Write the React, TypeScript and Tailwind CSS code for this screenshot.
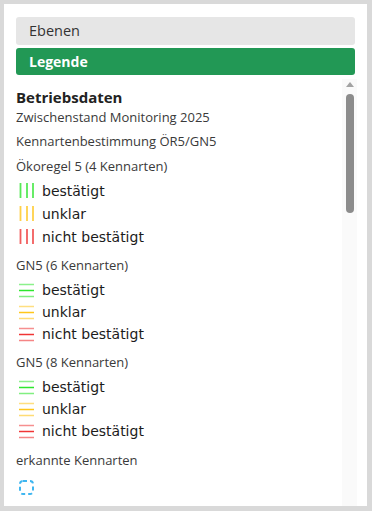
import React from "react";

type Status = { label: string; color: string };

const statuses: Status[] = [
  { label: "bestätigt", color: "#2ee62e" },
  { label: "unklar", color: "#ffc61a" },
  { label: "nicht bestätigt", color: "#f03535" },
];

// three vertical strokes (Ökoregel 5)
function VLines({ color }: { color: string }) {
  return (
    <svg width="15" height="15" viewBox="0 0 15 15" className="shrink-0">
      <line x1="1.5" y1="0" x2="1.5" y2="15" stroke={color} strokeWidth="1.8" opacity="0.8" />
      <line x1="8" y1="0" x2="8" y2="15" stroke={color} strokeWidth="1.8" opacity="0.8" />
      <line x1="14" y1="0" x2="14" y2="15" stroke={color} strokeWidth="1.8" opacity="0.8" />
    </svg>
  );
}

// three horizontal strokes, outer ones paler (GN5)
function HLines({ color }: { color: string }) {
  return (
    <svg width="15" height="15" viewBox="0 0 15 15" className="shrink-0">
      <line x1="0" y1="1.5" x2="15" y2="1.5" stroke={color} strokeWidth="1.5" opacity="0.55" />
      <line x1="0" y1="7.5" x2="15" y2="7.5" stroke={color} strokeWidth="1.5" />
      <line x1="0" y1="13.5" x2="15" y2="13.5" stroke={color} strokeWidth="1.5" opacity="0.6" />
    </svg>
  );
}

function LegendRow({
  status,
  vertical,
  tall,
}: {
  status: Status;
  vertical?: boolean;
  tall?: boolean;
}) {
  return (
    <div
      className={`flex items-center gap-2 pl-[3px] ${tall ? "h-[23px]" : "h-[22px]"}`}
    >
      {vertical ? <VLines color={status.color} /> : <HLines color={status.color} />}
      <span className="font-['DejaVu_Sans',sans-serif] text-[14px] leading-none text-[#1c1c1c]">
        {status.label}
      </span>
    </div>
  );
}

export default function App() {
  return (
    <div className="h-[511px] w-[372px] bg-white border-[#d9d9d9] border-t-4 border-l-4 border-r-[5px] border-b-[5px] font-['Open_Sans',sans-serif] flex flex-col">
      <div className="px-3 pt-[13px] flex flex-col">
        <div className="h-[28px] rounded-[3px] bg-[#e6e6e6] pl-[13px] flex items-center text-[14.5px] text-[#333]">
          Ebenen
        </div>
        <div className="mt-[3px] h-[27px] rounded-[3px] bg-[#229855] pl-[13px] flex items-center text-[14px] font-bold text-white">
          Legende
        </div>
      </div>

      <div className="mt-[4px] flex flex-1 min-h-0 pl-3 pr-[10px]">
        <div className="flex-1 min-w-0 overflow-hidden pt-2 text-[13px] text-[#3a3a3a]">
          <div className="h-5 leading-5 text-[15px] font-bold text-[#222]">Betriebsdaten</div>
          <div className="h-5 leading-5">Zwischenstand Monitoring 2025</div>
          <div className="mt-[4px] h-5 leading-5">Kennartenbestimmung ÖR5/GN5</div>
          <div className="mt-[5px] h-5 leading-5">Ökoregel 5 (4 Kennarten)</div>
          <div className="mt-[3px]">
            {statuses.map((s) => (
              <LegendRow key={s.label} status={s} vertical tall />
            ))}
          </div>

          <div className="mt-[7px] h-5 leading-5">GN5 (6 Kennarten)</div>
          <div className="mt-[4px]">
            {statuses.map((s) => (
              <LegendRow key={s.label} status={s} />
            ))}
          </div>

          <div className="mt-[7px] h-5 leading-5">GN5 (8 Kennarten)</div>
          <div className="mt-[4px]">
            {statuses.map((s) => (
              <LegendRow key={s.label} status={s} />
            ))}
          </div>

          <div className="mt-2 h-5 leading-5">erkannte Kennarten</div>
          <div className="mt-[10px] pl-[3px]">
            <svg width="15" height="15" viewBox="0 0 15 15">
              <rect
                x="1"
                y="1"
                width="13"
                height="13"
                rx="3"
                fill="none"
                stroke="#3fb6f0"
                strokeWidth="2"
                strokeDasharray="4 3"
              />
            </svg>
          </div>
        </div>

        {/* scrollbar */}
        <div className="w-[15px] shrink-0 bg-[#fafafa] flex flex-col items-center">
          <div className="mt-[3px] h-0 w-0 border-l-[4px] border-r-[4px] border-b-[5px] border-l-transparent border-r-transparent border-b-[#a3a3a3]" />
          <div className="mt-[7px] w-2 h-[119px] rounded-full bg-[#8c8c8c]" />
        </div>
      </div>
    </div>
  );
}
